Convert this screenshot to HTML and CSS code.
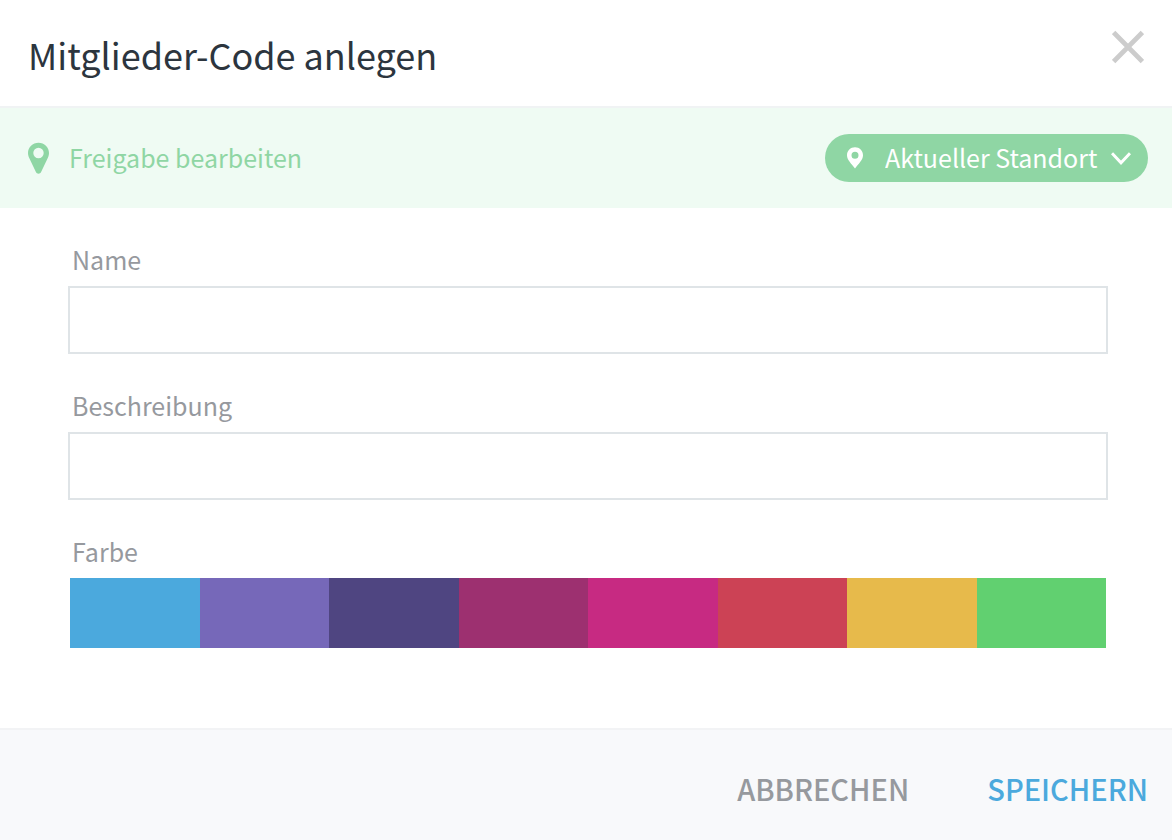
FILE: index.html
```html
<!DOCTYPE html>
<html lang="de">
  <head>
    <meta charset="UTF-8" />
    <meta name="viewport" content="width=device-width, initial-scale=1" />
    <title>Mitglieder-Code anlegen</title>
    <link rel="stylesheet" href="styles.css">
  </head>
  <body>
    <form class="modal">
      <header class="modal-header">
        <h1>Mitglieder-Code anlegen</h1>
        <button type="button" class="close-btn" aria-label="Schließen">
          <svg width="32" height="34" viewBox="0 0 32 34">
            <path d="M1.6 2.4L30.4 31.6M30.4 2.4L1.6 31.6" fill="none" stroke="#cccccc" stroke-width="4.8" />
          </svg>
        </button>
      </header>

      <div class="share-bar">
        <svg class="share-pin" width="21" height="32" viewBox="0 0 21 32">
          <path fill="#8fd6a4" fill-rule="evenodd" d="M10.5 0.8C4.7 0.8 0 5.3 0 11C0 12.8 0.5 14.3 1.1 15.7L7.9 30.1C8.4 31.2 9.4 31.8 10.5 31.8S12.6 31.2 13.1 30.1L19.9 15.7C20.5 14.3 21 12.8 21 11C21 5.3 16.3 0.8 10.5 0.8ZM10.5 5.8A5.2 5.2 0 1 1 10.5 16.2A5.2 5.2 0 1 1 10.5 5.8Z" />
        </svg>
        <label for="location" class="share-label">Freigabe bearbeiten</label>
        <div class="location">
          <svg width="16" height="22" viewBox="0 0 16 22">
            <path fill="#ffffff" fill-rule="evenodd" d="M8 0.3C3.5 0.3 0 3.8 0 8.2C0 13 4.4 16.6 8 21.5C11.6 16.6 16 13 16 8.2C16 3.8 12.5 0.3 8 0.3ZM8 4.8A3.5 3.5 0 1 1 8 11.8A3.5 3.5 0 1 1 8 4.8Z" />
          </svg>
          <select id="location">
            <option>Aktueller Standort</option>
          </select>
          <svg width="20" height="14" viewBox="0 0 20 14">
            <path d="M1 2.2L10 11.8L19 2.2" fill="none" stroke="#ffffff" stroke-width="3" />
          </svg>
        </div>
      </div>

      <div class="modal-body">
        <div class="field">
          <label for="name">Name</label>
          <input type="text" id="name" class="text-input" />
        </div>
        <div class="field">
          <label for="description">Beschreibung</label>
          <input type="text" id="description" class="text-input" />
        </div>
        <div class="field" role="radiogroup" aria-labelledby="colorLabel">
          <span class="field-title" id="colorLabel">Farbe</span>
          <div class="colors">
            <input type="radio" name="color" class="color blue" aria-label="Blau" />
            <input type="radio" name="color" class="color violet" aria-label="Violett" />
            <input type="radio" name="color" class="color indigo" aria-label="Indigo" />
            <input type="radio" name="color" class="color plum" aria-label="Pflaume" />
            <input type="radio" name="color" class="color pink" aria-label="Pink" />
            <input type="radio" name="color" class="color red" aria-label="Rot" />
            <input type="radio" name="color" class="color yellow" aria-label="Gelb" />
            <input type="radio" name="color" class="color green" aria-label="Grün" />
          </div>
        </div>
      </div>

      <footer class="modal-footer">
        <button type="button" class="text-btn">ABBRECHEN</button>
        <button type="submit" class="text-btn save-btn">SPEICHERN</button>
      </footer>
    </form>
  </body>
</html>
```

FILE: styles.css
```css
* {
  margin: 0;
  padding: 0;
  box-sizing: border-box;
}

body {
  font-family: "Source Sans Pro", "Noto Sans CJK SC", sans-serif;
  font-size: 25px;
  line-height: 38px;
  color: #96999e;
  background: #ffffff;
}

button,
input,
select {
  font: inherit;
  color: inherit;
  border: none;
  border-radius: 0;
  background: none;
}

button,
select {
  cursor: pointer;
}

svg {
  display: block;
  flex-shrink: 0;
}

.modal-header {
  display: flex;
  justify-content: space-between;
  align-items: flex-start;
  padding: 30px 28px 28px;
  border-bottom: 2px solid #f0f3f4;
}

.modal-header h1 {
  font-size: 36px;
  font-weight: 400;
  line-height: 48px;
  color: #2c353e;
}

.share-bar {
  display: flex;
  align-items: center;
  padding: 26px 24px 26px 28px;
  color: #8fd6a4;
  background: #effbf3;
}

.share-label {
  flex: 1;
  margin-left: 20px;
  padding-bottom: 2px;
}

.location {
  display: flex;
  align-items: center;
  height: 48px;
  padding: 0 17px 0 22px;
  border-radius: 24px;
  color: #ffffff;
  background: #8fd6a4;
}

.location select {
  appearance: none;
  margin: 0 13px 0 22px;
  padding-bottom: 2px;
}

.location option {
  color: #2c353e;
}

.modal-body {
  padding: 32px 64px 80px 68px;
}

.field + .field {
  margin-top: 32px;
}

.field label,
.field-title {
  display: block;
  margin: 0 4px 8px;
}

.text-input {
  display: block;
  width: 100%;
  height: 68px;
  padding: 0 16px;
  border: 2px solid #dfe4e7;
  color: #2c353e;
}

.colors {
  display: flex;
  margin: 0 2px;
}

.color {
  appearance: none;
  flex: 1;
  height: 70px;
  cursor: pointer;
}

.blue {
  background: #4ba9dd;
}

.violet {
  background: #7668b9;
}

.indigo {
  background: #4f4581;
}

.plum {
  background: #9d3070;
}

.pink {
  background: #c72a82;
}

.red {
  background: #cc4255;
}

.yellow {
  background: #e7ba4b;
}

.green {
  background: #61d070;
}

.modal-footer {
  display: flex;
  justify-content: flex-end;
  gap: 78px;
  padding: 36px 24px 30px;
  border-top: 2px solid #f2f3f5;
  background: #f8f9fb;
}

.text-btn {
  font-size: 29px;
  font-weight: 500;
  line-height: 44px;
}

.save-btn {
  color: #4ba9dd;
}
```
